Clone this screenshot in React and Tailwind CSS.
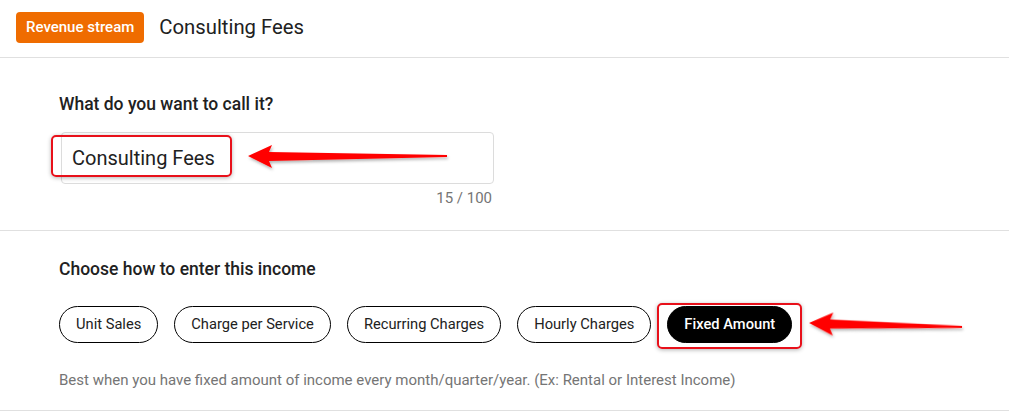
import React from 'react'

const options = ['Unit Sales', 'Charge per Service', 'Recurring Charges', 'Hourly Charges', 'Fixed Amount']

function Arrow({ className, length = 200 }) {
  // red annotation arrow pointing left, thin tail on the right
  return (
    <svg className={className} width={length + 6} height="30" viewBox={`0 0 ${length + 6} 30`} fill="none">
      <defs>
        <filter id="ash" x="-10%" y="-50%" width="120%" height="200%">
          <feDropShadow dx="1" dy="2" stdDeviation="1.5" floodColor="#000" floodOpacity="0.3" />
        </filter>
      </defs>
      <polygon
        filter="url(#ash)"
        fill="#f00"
        points={`1,13 25,2 22,9 ${length},12 ${length},14 22,18 25,25`}
      />
    </svg>
  )
}

export default function App() {
  return (
    <div className="min-h-screen bg-white text-[#212121]" style={{ fontFamily: 'Roboto, "Liberation Sans", sans-serif' }}>
      {/* header */}
      <div className="flex items-center gap-[15px] h-[58px] px-4 border-b border-[#e0e0e0]">
        <span className="bg-[#ef6c00] text-white text-[15px] font-medium rounded-[4px] px-[10px] h-[31px] flex items-center -mt-[2px]">
          Revenue stream
        </span>
        <span className="text-[20.3px] -mt-[2px]">Consulting Fees</span>
      </div>

      {/* name section */}
      <div className="pl-[59px] pt-[34px] pb-[22px] border-b border-[#e0e0e0]">
        <h2 className="text-[17.5px] font-medium leading-6">What do you want to call it?</h2>
        <div className="relative w-[433px] ml-[2px] mt-4">
          <div className="h-[52px] border border-[#dcdcdc] rounded-[4px] flex items-center pl-[10px] text-[20px]">
            Consulting Fees
          </div>
          <div className="absolute left-[-10px] top-[3px] w-[181px] h-[42px] border-2 border-[#e8101a] rounded-[5px] shadow-[0_1px_4px_rgba(0,0,0,0.3)]" />
          <Arrow className="absolute left-[186px] top-[11px]" length={200} />
          <div className="text-right text-[15px] text-[#757575] mt-1 pr-[2px] leading-5">15 / 100</div>
        </div>
      </div>

      {/* income method section */}
      <div className="pl-[59px] pt-[26px] pb-5 border-b border-[#e0e0e0]">
        <h2 className="text-[17.5px] font-medium leading-6">Choose how to enter this income</h2>
        <div className="flex gap-4 mt-[25px]">
          {options.map((o) => {
            const active = o === 'Fixed Amount'
            return (
              <div key={o} className="relative">
                <button
                  className={
                    active
                      ? 'h-[37px] px-4 rounded-full border border-black bg-black text-white text-[14.7px] font-medium'
                      : 'h-[37px] px-4 rounded-full border border-black bg-white text-[14.7px]'
                  }
                >
                  {o}
                </button>
                {active && (
                  <>
                    <div className="absolute -left-[10px] -right-[10px] -top-[3px] -bottom-[6px] border-2 border-[#e8101a] rounded-[5px] shadow-[0_1px_4px_rgba(0,0,0,0.3)]" />
                    <Arrow className="absolute left-[calc(100%+16px)] top-[6px] rotate-[1.5deg]" length={154} />
                  </>
                )}
              </div>
            )
          })}
        </div>
        <p className="text-[15px] text-[#757575] mt-[27px] leading-5">
          Best when you have fixed amount of income every month/quarter/year. (Ex: Rental or Interest Income)
        </p>
      </div>
    </div>
  )
}
